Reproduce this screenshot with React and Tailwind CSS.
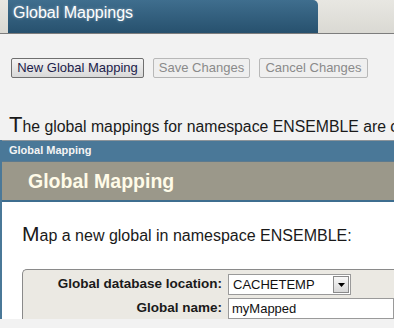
export default function App() {
  return (
    <div className="w-[394px] h-[328px] overflow-hidden bg-[#f2f2f2] font-['Liberation_Sans',Arial,sans-serif] text-black">
      {/* page header */}
      <div className="h-[34px] border-b border-[#7d7d7d] bg-gradient-to-b from-[#e8e7e2] to-[#dad9d3] pl-[8px]">
        <div className="h-[33px] w-[310px] rounded-tr-[5px] bg-gradient-to-b from-[#3f6e8e] to-[#27516e] pl-[5px] pt-[4px] text-[16px] leading-[18px] text-white [text-shadow:0_0_3px_rgba(255,255,255,0.45)]">
          Global Mappings
        </div>
      </div>

      {/* toolbar */}
      <div className="mt-[24px] flex gap-[9px] pl-[11px]">
        <button
          type="button"
          className="h-[20px] w-[133px] rounded-[2px] border border-[#6f6f6f] bg-gradient-to-b from-[#f4f4f4] to-[#d9d9d9] text-[13px] leading-[18px] text-[#1c1c4a]"
        >
          New Global Mapping
        </button>
        <button
          type="button"
          className="h-[20px] w-[97px] rounded-[2px] border border-[#b8b8b8] bg-[#efefef] text-[13px] leading-[18px] text-[#8a8a8a]"
        >
          Save Changes
        </button>
        <button
          type="button"
          className="h-[20px] w-[109px] rounded-[2px] border border-[#b8b8b8] bg-[#efefef] text-[13px] leading-[18px] text-[#8a8a8a]"
        >
          Cancel Changes
        </button>
      </div>

      <p className="mt-[37px] whitespace-nowrap pl-[9px] text-[15.8px] leading-[20px] text-[#1a1a1a]">
        <span className="text-[22px]">T</span>he global mappings for namespace ENSEMBLE are currently
      </p>

      {/* dialog */}
      <div className="mt-[3px] border-l-2 border-[#4a7898] bg-white">
        <div className="h-[22px] border-t border-b border-t-[#8c949a] border-b-[#5d7a8e] bg-[#4a7898] pl-[7px] text-[11px] font-bold leading-[19px] text-[#f4f4f4]">
          Global Mapping
        </div>
        <div className="h-[40px] border-b-2 border-[#3d6d8f] bg-[#9b988a] pl-[26px] pt-[8px] text-[19.5px] font-bold leading-[22px] text-[#fffbe8]">
          Global Mapping
        </div>

        <p className="mt-[21px] whitespace-nowrap pl-[20px] text-[16px] leading-[22px] text-[#1a1a1a]">
          <span className="text-[21px]">M</span>ap a new global in namespace ENSEMBLE:
        </p>

        <div className="ml-[20px] mt-[22px] rounded-tl-[5px] border-l border-t border-[#8a8a8a] bg-[#ebe9e3] pt-[4px]">
          <div className="grid grid-cols-[199px_1fr] items-center gap-x-[6px] gap-y-[3px]">
            <span className="text-right text-[13.5px] font-bold text-[#1a1a1a]">Global database location:</span>
            <div className="flex h-[21px] w-[123px] items-center border border-[#9a9a9a] bg-white pl-[4px] pr-[1px]">
              <span className="flex-1 text-[13px] text-[#111]">CACHETEMP</span>
              <span className="flex h-[17px] w-[16px] items-center justify-center border border-[#8a8a8a] bg-gradient-to-b from-[#f8f8f8] to-[#d8d8d8]">
                <svg width="7" height="4" viewBox="0 0 7 4">
                  <path d="M0 0h7L3.5 4z" fill="#000" />
                </svg>
              </span>
            </div>
            <span className="text-right text-[13.5px] font-bold text-[#1a1a1a]">Global name:</span>
            <div className="flex h-[21px] items-center border border-[#9a9a9a] bg-white pl-[3px] text-[13px] text-[#111]">
              myMapped
            </div>
          </div>
        </div>
      </div>
    </div>
  );
}
